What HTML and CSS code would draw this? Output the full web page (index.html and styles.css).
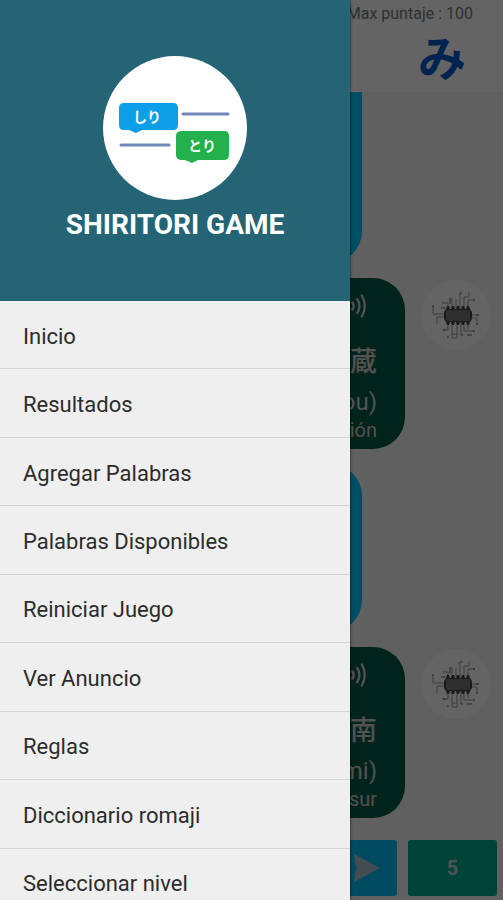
FILE: index.html
```html
<!DOCTYPE html>
<html lang="es">
<head>
  <meta charset="UTF-8" />
  <meta name="viewport" content="width=device-width, initial-scale=1.0"/>
  <title>Shiritori Game</title>
  <link rel="stylesheet" href="styles.css">
</head>
<body>
  <svg class="defs" aria-hidden="true">
    <symbol id="chip" viewBox="0 0 70 70">
      <g fill="none" stroke="#999" stroke-width="1">
        <path d="M27 28v-5h-6M31 28V18M35 28v-9M39 28V14h-2M43 28V17h5v-5M47 28v-8h7M23 34H12v-8M23 37h-7v7M49 35h9M49 38h7v7M27 42v8h-6M31 42v16M36 42v16M31 58h5M31 54h5M40 42v13M43 42v9h10M47 42v7"/>
      </g>
      <path stroke="#666" stroke-width="1" d="M20 28h4M29 18v6M39 13h2M52 20h2M11 26h2M22 50h3M55 44h2M26 57h2M52 51h2M46 55h5M40 55h2M55 35h3"/>
      <path fill="#444" d="M25 29l1-3h2l1 3h1l1-3h2l1 3h1l1-3h2l1 3h1l1-3h2l1 3h1l1-3h2l1 3 2 3v7l-2 3-1 3h-2l-1-3h-1l-1 3h-2l-1-3h-1l-1 3h-2l-1-3h-1l-1 3h-2l-1-3h-1l-1 3h-2l-1-3-2-3v-7z"/>
      <rect x="25" y="30" width="24" height="11" rx="2" fill="#777"/>
    </symbol>
    <symbol id="speaker" viewBox="0 0 30 24">
      <path fill="currentColor" d="M1 8h6l8-7v22l-8-7H1z"/>
      <path fill="none" stroke="currentColor" stroke-width="2" stroke-linecap="round" d="M18 9q2 3 0 6M22 6q4 6 0 12M26 3q5 9 0 18"/>
    </symbol>
  </svg>

  <main class="game">
    <header class="top">
      <p class="score">Max puntaje : 100</p>
      <p class="kana">み</p>
    </header>
    <section class="chat">
      <div class="bubble mine first"></div>
      <div class="turn">
        <div class="bubble rival">
          <svg class="sound"><use href="#speaker"/></svg>
          <p class="word">蔵</p>
          <p class="reading">(zou)</p>
          <p class="meaning">colección</p>
        </div>
        <div class="avatar"><svg><use href="#chip"/></svg></div>
      </div>
      <div class="bubble mine"></div>
      <div class="turn">
        <div class="bubble rival">
          <svg class="sound"><use href="#speaker"/></svg>
          <p class="word">南</p>
          <p class="reading">(minami)</p>
          <p class="meaning">sur</p>
        </div>
        <div class="avatar"><svg><use href="#chip"/></svg></div>
      </div>
    </section>
    <footer class="actions">
      <button class="send" aria-label="Enviar">
        <svg viewBox="0 0 32 28"><path fill="#a0c0cc" d="M4 0l26 14L4 28l1-10 2-4-2-4z"/></svg>
      </button>
      <button class="count">5</button>
    </footer>
  </main>

  <div class="scrim"></div>

  <aside class="drawer">
    <div class="brand">
      <svg class="logo" viewBox="0 0 144 144">
        <circle cx="72" cy="72" r="72" fill="#fff"/>
        <path d="M80 58h45M18 89h48" stroke="#7088b8" stroke-width="3" stroke-linecap="round"/>
        <path fill="#0c9fe8" d="M21 47h49q5 0 5 5v17q0 5-5 5H39l-6 3-7-3h-5q-5 0-5-5V52q0-5 5-5z"/>
        <path fill="#22b14c" d="M79 75h42q5 0 5 5v19q0 5-5 5H95l-6 3-7-3h-3q-6 0-6-5V80q0-5 6-5z"/>
        <text class="logo-text" x="44" y="66">しり</text>
        <text class="logo-text" x="99" y="95">とり</text>
      </svg>
      <h1>SHIRITORI GAME</h1>
    </div>
    <nav class="menu">
      <a href="#">Inicio</a>
      <a href="#">Resultados</a>
      <a href="#">Agregar Palabras</a>
      <a href="#">Palabras Disponibles</a>
      <a href="#">Reiniciar Juego</a>
      <a href="#">Ver Anuncio</a>
      <a href="#">Reglas</a>
      <a href="#">Diccionario romaji</a>
      <a href="#">Seleccionar nivel</a>
    </nav>
  </aside>
</body>
</html>
```
FILE: styles.css
```css
* { box-sizing:border-box; margin:0; padding:0; }
body {
  position:relative; min-height:100vh; overflow:hidden;
  font-family:Roboto,"Noto Sans CJK JP",sans-serif;
  background:#f0f0f0;
}
.defs { position:absolute; width:0; height:0; }

/* game screen */
.game { display:flex; flex-direction:column; height:100vh; }
.top {
  display:flex; flex-direction:column; align-items:flex-end;
  height:92px; background:#fafafa;
}
.score {
  padding:4px 30px 0 0;
  font-size:16px; line-height:20px; color:#777;
}
.kana {
  padding-right:37px;
  font-size:48px; line-height:72px; font-weight:700;
  color:#0058c8;
}
.chat {
  flex:1; display:flex; flex-direction:column; gap:15px;
  overflow:hidden;
}
.bubble { border-radius:32px; }
.mine {
  width:72%; height:168px; flex-shrink:0;
  background:#00c0ff;
}
.mine.first { height:171px; border-radius:0 0 32px 32px; }
.turn {
  display:flex; justify-content:flex-end; gap:16px;
  padding-right:12px;
}
.rival {
  display:flex; flex-direction:column; align-items:flex-end;
  width:55%; height:171px; padding:14px 28px 0 0;
  background:#005a45; color:#ccc;
}
.sound { width:40px; height:28px; margin-right:8px; }
.word { font-size:27px; line-height:40px; font-weight:500; margin-top:22px; }
.reading { font-size:24px; line-height:32px; margin-top:4px; }
.meaning { font-size:20px; line-height:24px; }
.avatar {
  width:70px; height:70px; margin-top:2px;
  border-radius:50%; background:#fafafa;
}
.avatar svg { width:70px; height:70px; }
.actions {
  display:flex; justify-content:flex-end; gap:11px;
  padding:0 6px 4px;
}
.actions button {
  width:89px; height:56px; border:none; border-radius:3px;
  font:700 20px Roboto,sans-serif; color:#ccc;
}
.actions .send { background:#00b8f4; text-align:right; padding-right:15px; }
.actions .count { background:#00a890; }
.send svg { width:32px; height:28px; vertical-align:middle; }

.scrim { position:absolute; inset:0; background:rgba(0,0,0,0.6); }

/* side menu */
.drawer {
  position:absolute; top:0; bottom:0; left:0;
  width:calc(100% - 153px); overflow:hidden;
  background:#efefef; box-shadow:0 0 3px rgba(0,0,0,0.7);
}
.brand {
  display:flex; flex-direction:column; align-items:center;
  height:301px; padding-top:56px;
  background:#246475;
}
.logo { width:144px; height:144px; }
.logo-text {
  font-size:14px; font-weight:700; fill:#fff;
  text-anchor:middle;
}
h1 {
  margin-top:8px;
  font-size:28px; line-height:34px; font-weight:700; color:#fff;
}
.menu { display:flex; flex-direction:column; height:616px; }
.menu a {
  flex:1; display:flex; align-items:center;
  padding:3px 0 0 23px;
  border-bottom:1px solid #d4d4d4;
  font-size:22px; color:#2c2c2c; text-decoration:none;
}
```
